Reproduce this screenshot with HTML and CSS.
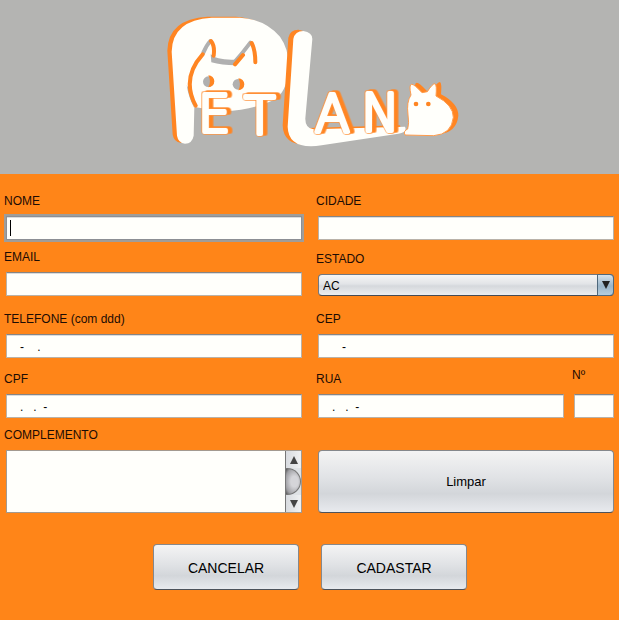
FILE: index.html
```html
<!DOCTYPE html>
<html lang="pt-BR">
<head>
<meta charset="utf-8">
<meta name="viewport" content="width=device-width, initial-scale=1">
<title>Petland - Cadastro</title>
<link rel="stylesheet" href="styles.css">
</head>
<body>
<header class="banner">
  <svg class="logo" viewBox="15 15 900 420" role="img" aria-label="Petland">
    <defs>
      <path id="head" d="M66 392L50 140Q52 45 170 38L255 38Q330 42 375 95Q400 130 401 180Q400 250 365 280Q310 312 205 320L118 306L116 392Q112 415 90 416Q70 414 66 392Z"/>
      <path id="swoosh" d="M415 102Q420 78 445 78Q472 82 472 102L451 340Q450 370 475 373L750 365Q758 382 730 386L500 421Q400 436 398 365Z"/>
      <path id="cat" d="M750 390Q744 378 758 372Q763 355 759 330Q754 290 768 270Q761 238 770 238Q777 237 801 263L817 260Q832 236 840 236Q846 240 843 273Q895 300 895 337Q890 388 836 392Z"/>
    </defs>
    <use class="orange" href="#head" x="-13" y="-3"/>
    <use class="white" href="#head"/>
    <use class="orange" href="#swoosh" x="-15" y="-4"/>
    <use class="white" href="#swoosh"/>
    <path class="gray" d="M118 310Q112 285 106 262L95 240Q100 275 118 310Z"/>
    <path class="gray" d="M167 148Q185 166 240 164L242 181Q200 181 169 172Z"/>
    <path class="line gray-line" d="M145 143Q155 120 166 108M240 170Q262 145 286 113"/>
    <path class="line orange-line" d="M122 302Q78 220 143 148M168 108Q180 122 176 152M240 178L264 150M290 114Q301 135 301 172"/>
    <circle class="gray" cx="160" cy="230" r="16"/>
    <path class="orange" d="M160 211a18 18 0 0 1 0 36q10-17 0-36Z"/>
    <circle class="gray" cx="249" cy="238" r="16"/>
    <path class="orange" d="M250 220a18 18 0 0 1 0 36q10-18 0-36Z"/>
    <g class="letters">
      <text x="178" y="382">E</text>
      <text x="314" y="386">T</text>
      <text x="532" y="381">A</text>
      <text x="676" y="377">N</text>
    </g>
    <use class="orange" href="#cat" x="15" y="-5"/>
    <use class="white cat-edge" href="#cat"/>
    <circle class="orange" cx="783" cy="297" r="7"/>
    <circle class="orange" cx="820" cy="297" r="7"/>
  </svg>
</header>
<main>
<form class="form">
  <div class="fields">
    <div class="field">
      <label for="nome">NOME</label>
      <input class="box active" id="nome" type="text">
    </div>
    <div class="field">
      <label for="cidade">CIDADE</label>
      <input class="box" id="cidade" type="text">
    </div>
    <div class="field">
      <label for="email">EMAIL</label>
      <input class="box" id="email" type="text">
    </div>
    <div class="field">
      <label for="estado">ESTADO</label>
      <div class="combo">
        <select id="estado"><option>AC</option></select>
        <span class="combo-arrow"><svg width="8" height="8" viewBox="0 0 8 8"><path d="M0 0H8L4 8Z"/></svg></span>
      </div>
    </div>
    <div class="field">
      <label for="telefone">TELEFONE (com ddd)</label>
      <input class="box" id="telefone" type="text" value="   -    .">
    </div>
    <div class="field">
      <label for="cep">CEP</label>
      <input class="box" id="cep" type="text" value="      -">
    </div>
    <div class="field">
      <label for="cpf">CPF</label>
      <input class="box" id="cpf" type="text" value="   .   .  -">
    </div>
    <div class="address">
      <div class="field street">
        <label for="rua">RUA</label>
        <input class="box" id="rua" type="text" value="   .   .  -">
      </div>
      <div class="field number">
        <label for="numero">Nº</label>
        <input class="box" id="numero" type="text">
      </div>
    </div>
    <div class="field">
      <label for="complemento">COMPLEMENTO</label>
      <div class="area">
        <textarea id="complemento"></textarea>
        <div class="scroll">
          <button type="button" aria-label="Subir"><svg width="8" height="8" viewBox="0 0 8 8"><path d="M4 0L8 8H0Z"/></svg></button>
          <span class="thumb"></span>
          <button type="button" aria-label="Descer"><svg width="8" height="8" viewBox="0 0 8 8"><path d="M0 0H8L4 8Z"/></svg></button>
        </div>
      </div>
    </div>
    <button class="button clear" type="reset">Limpar</button>
  </div>
  <div class="actions">
    <button class="button" type="button">CANCELAR</button>
    <button class="button" type="submit">CADASTAR</button>
  </div>
</form>
</main>
</body>
</html>
```
FILE: styles.css
```css
* { box-sizing: border-box; }

body {
  margin: 0;
  min-height: 100vh;
  background: #ff8518;
  color: #1c0c04;
  font: 12px/16px "Liberation Sans", Arial, sans-serif;
}

input, select, textarea, button {
  margin: 0;
  font: inherit;
  color: #000;
}

.banner {
  display: flex;
  justify-content: center;
  padding: 10px 0 24px;
  background: #b4b4b2;
}

.logo { width: 300px; height: 140px; }
.white { fill: #fffffb; }
.orange { fill: #ff8522; }
.gray { fill: #b0b0b0; }
.cat-edge { stroke: #ff9c4c; stroke-width: 3; }

.line {
  fill: none;
  stroke-width: 12;
  stroke-linecap: round;
  stroke-linejoin: round;
}

.orange-line { stroke: #ff8522; }
.gray-line { stroke: #b0b0b0; }

.letters {
  font: 200 154px "DejaVu Sans", sans-serif;
  text-anchor: middle;
  fill: #fffffb;
  stroke: #fffffb;
  stroke-width: 12;
  stroke-linejoin: round;
  stroke-linecap: round;
  filter: drop-shadow(2px 2px 0 #ff9540) drop-shadow(-2px -2px 0 #ff9540) drop-shadow(11px -3px 0 #ff8522);
}

.form { padding: 18px 5px 0 6px; }

.fields {
  display: grid;
  grid-template-columns: 1fr 1fr;
  grid-template-rows: 48px 48px 54px 52px minmax(87px, auto);
  gap: 8px 16px;
  align-items: end;
}

.field {
  display: flex;
  flex-direction: column;
  gap: 7px;
  min-width: 0;
}

.field label { margin-left: -2px; }

.box {
  width: 100%;
  height: 24px;
  padding: 2px 3px 0;
  border: 1px solid #b9b2a8;
  border-top-color: #858585;
  border-radius: 0;
  background: #fffffb;
  box-shadow: inset 0 1px #dcdcdc;
  outline: none;
}

.active {
  background: linear-gradient(#000, #000) 3px 3px / 1px 16px no-repeat #fffffb;
  border-color: #8c8f94;
  box-shadow: inset 0 1px #dcdcdc, 0 0 0 2px #a09d99;
}

.combo { position: relative; height: 22px; }

.combo select {
  display: block;
  width: 100%;
  height: 100%;
  padding: 2px 20px 0 4px;
  appearance: none;
  border: 1px solid #717780;
  border-bottom-color: #454b55;
  border-radius: 4px;
  background: linear-gradient(#f6f6f6, #e2e4e7 45%, #d5d8dc 55%, #eceef0);
}

.combo-arrow {
  position: absolute;
  inset: 0 0 0 auto;
  display: flex;
  align-items: center;
  justify-content: center;
  width: 17px;
  border: 1px solid #4f687c;
  border-radius: 0 4px 4px 0;
  background: linear-gradient(#d5e2ec, #9ab5c9 55%, #b5cddd);
  pointer-events: none;
}

.combo-arrow svg, .scroll svg { display: block; fill: #222; }

.address { display: flex; align-items: flex-end; gap: 10px; }
.street { flex: 1; }
.number { flex: 0 0 40px; gap: 11px; }

.area {
  display: flex;
  height: 63px;
  border: 1px solid #a39a90;
  background: #fffffb;
}

.area textarea {
  flex: 1;
  min-width: 0;
  padding: 4px;
  border: 0;
  background: none;
  resize: none;
  outline: none;
  overflow: hidden;
}

.scroll {
  display: flex;
  flex-direction: column;
  width: 16px;
  border-left: 1px solid #777;
  background: #dfe2e5;
}

.scroll button {
  display: flex;
  align-items: center;
  justify-content: center;
  height: 17px;
  padding: 0;
  border: 0;
  background: linear-gradient(90deg, #d8dbdf, #f0f1f2);
}

.scroll svg { fill: #444; }

.thumb {
  flex: 1;
  border: 1px solid #777;
  border-left: 0;
  border-radius: 0 14px 14px 0;
  background: radial-gradient(ellipse at 60% 50%, #d5d5d9 30%, #a0a0a4 75%, #555);
}

.button {
  border: 1px solid #85888c;
  border-bottom-color: #4c525b;
  border-radius: 4px;
  background: linear-gradient(#f4f4f4, #e0e2e5 45%, #d3d6da 70%, #e8eaee);
}

.clear { height: 63px; font-size: 13px; }

.actions {
  display: flex;
  justify-content: center;
  gap: 22px;
  padding: 31px 0;
}

.actions .button { width: 146px; height: 46px; padding: 2px 6px 0; font-size: 14px; }
```
